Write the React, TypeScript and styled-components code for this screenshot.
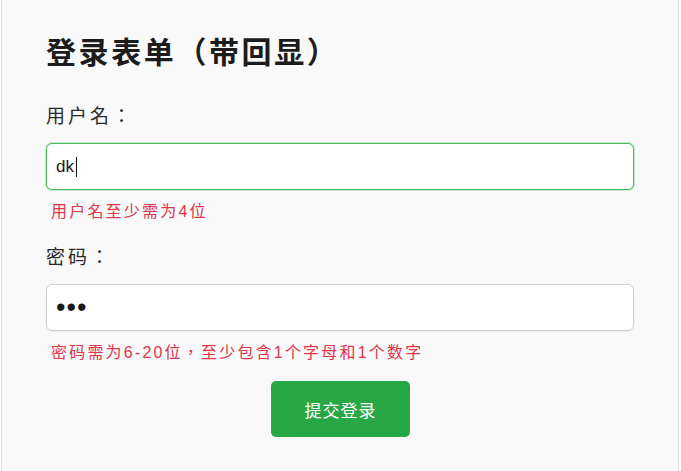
import React, { useState } from "react";
import styled, { createGlobalStyle } from "styled-components";

const FONT = `"Liberation Sans", "Noto Sans CJK TC", sans-serif`;

const Global = createGlobalStyle`
  html, body { margin: 0; padding: 0; background: #ffffff; }
  body { font-family: ${FONT}; color: #222; }
  * { box-sizing: border-box; }
`;

const Page = styled.div`
  padding: 0 2px 0 1px;
  min-height: 471px;
  display: flex;
`;

const Card = styled.form`
  flex: 1;
  background: #f9f9f9;
  border-left: 1px solid #dddddd;
  border-right: 1px solid #dddddd;
  padding: 35px 44px 30px 44px;
  display: flex;
  flex-direction: column;
`;

const Title = styled.h2`
  margin: 0 0 34px 0;
  font-size: 30px;
  line-height: 36px;
  letter-spacing: 2.6px;
  font-weight: 700;
  color: #1c1c1c;
`;

const Field = styled.div<{ $last?: boolean }>`
  display: flex;
  flex-direction: column;
  margin-bottom: ${(p) => (p.$last ? "18px" : "24px")};
`;

const Label = styled.label`
  font-size: 19px;
  line-height: 24px;
  letter-spacing: 3px;
  color: #2a2a2a;
  margin-bottom: 14px;
`;

const InputWrap = styled.div`
  position: relative;
  display: flex;
`;

const Caret = styled.span`
  position: absolute;
  left: 30px;
  top: 14px;
  width: 1px;
  height: 20px;
  background: #111;
  pointer-events: none;
`;

const Input = styled.input<{ $active?: boolean; $mask?: boolean }>`
  height: 47px;
  width: 100%;
  padding: 0 9px;
  font-family: ${FONT};
  font-size: ${(p) => (p.$mask ? "27px" : "17px")};
  letter-spacing: ${(p) => (p.$mask ? "1px" : "0")};
  color: #1a1a1a;
  background: #fff;
  border: 1px solid ${(p) => (p.$active ? "#4cbb5e" : "#cfcfcf")};
  border-radius: 6px;
  outline: none;
  caret-color: transparent;
  box-shadow: ${(p) => (p.$active ? "0 0 0 1px rgba(76,187,94,0.3)" : "0 1px 2px rgba(0,0,0,0.07)")};
`;

const Error = styled.div`
  margin-top: 12px;
  padding-left: 5px;
  font-size: 16px;
  line-height: 20px;
  letter-spacing: 2.2px;
  color: #e0344a;
`;

const Actions = styled.div`
  display: flex;
  justify-content: center;
`;

const Submit = styled.button`
  width: 139px;
  height: 56px;
  border: none;
  border-radius: 5px;
  background: #28a745;
  color: #fff;
  font-family: ${FONT};
  font-size: 17px;
  letter-spacing: 1px;
  padding: 0 0 0 1px;
  cursor: pointer;
`;

export default function App() {
  const [user, setUser] = useState("dk");
  const [pwd, setPwd] = useState("abc");
  return (
    <>
      <Global />
      <Page>
        <Card onSubmit={(e) => e.preventDefault()}>
          <Title>登录表单（带回显）</Title>
          <Field>
            <Label htmlFor="u">用户名：</Label>
            <InputWrap>
              <Input id="u" $active value={user} onChange={(e) => setUser(e.target.value)} />
              <Caret />
            </InputWrap>
            <Error>用户名至少需为4位</Error>
          </Field>
          <Field $last>
            <Label htmlFor="p">密码：</Label>
            <InputWrap>
              <Input id="p" type="password" $mask value={pwd} onChange={(e) => setPwd(e.target.value)} />
            </InputWrap>
            <Error>密码需为6-20位，至少包含1个字母和1个数字</Error>
          </Field>
          <Actions>
            <Submit type="submit">提交登录</Submit>
          </Actions>
        </Card>
      </Page>
    </>
  );
}
